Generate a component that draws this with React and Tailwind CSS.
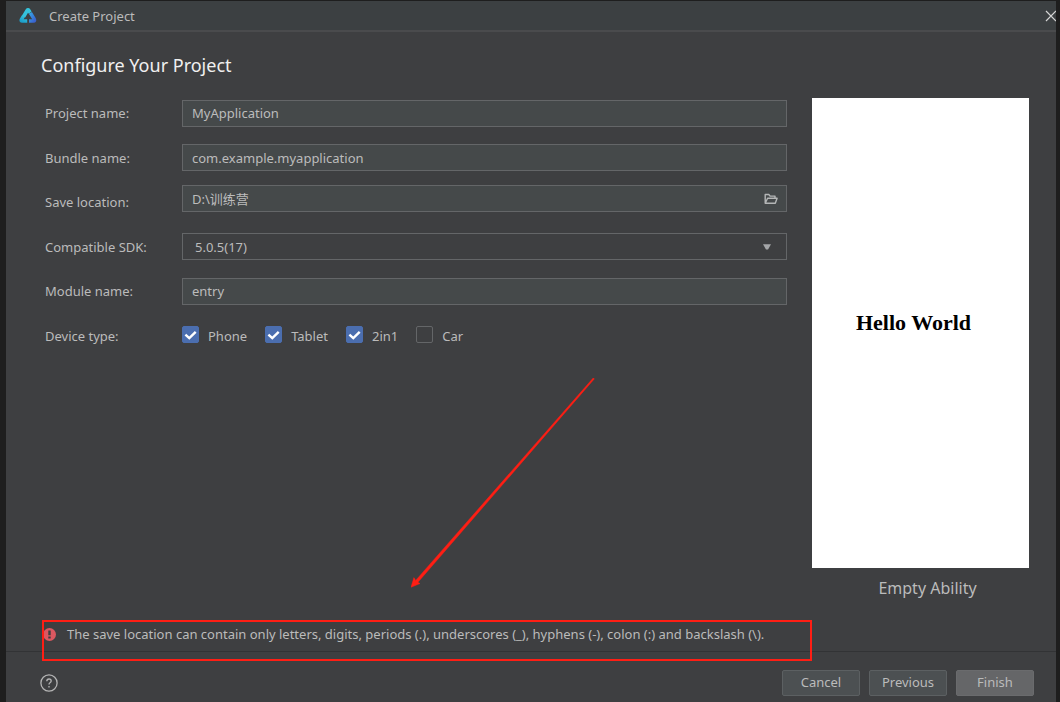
import { useState } from 'react'

const DEVICES = ['Phone', 'Tablet', '2in1', 'Car']

const FIELD =
  'block h-[27px] w-full rounded-none border border-[#646668] bg-[#45494a] px-[9px] text-[13px] text-[#bcbcbc] outline-none'

function Logo() {
  return (
    <svg viewBox="0 0 18 16" width="18" height="16" aria-hidden="true">
      <defs>
        <linearGradient id="logo-left" x1="0" y1="1" x2="0.7" y2="0">
          <stop offset="0" stopColor="#1c9fcb" />
          <stop offset="1" stopColor="#36c6dc" />
        </linearGradient>
        <linearGradient id="logo-right" x1="0" y1="0" x2="1" y2="1">
          <stop offset="0" stopColor="#35a9e6" />
          <stop offset="1" stopColor="#3a63d0" />
        </linearGradient>
      </defs>
      <path
        d="M8.2 13H3.4Q1.6 13 2.5 11.3L4.6 7.9"
        fill="none"
        stroke="url(#logo-left)"
        strokeWidth="3.6"
      />
      <path
        d="M3 7.4L6.6 1.4Q7.5 0 9 0Q10.5 0 11.4 1.4L12.6 3.4L9.8 5.8L9 4.8L6.2 9.4Z"
        fill="#35c3dc"
      />
      <path
        d="M11.4 4.8L15.2 11.2Q16.1 13 14.4 13H10"
        fill="none"
        stroke="url(#logo-right)"
        strokeWidth="3.6"
      />
    </svg>
  )
}

function Row({ label, htmlFor, children }) {
  return (
    <div className="flex items-center">
      <label htmlFor={htmlFor} className="w-[137px] shrink-0">
        {label}
      </label>
      <div className="relative flex-1">{children}</div>
    </div>
  )
}

function DeviceBox({ name, checked, onChange }) {
  return (
    <label className="flex items-center gap-[9px]">
      <span className="relative -mt-[3px] block size-[17px]">
        <input
          type="checkbox"
          checked={checked}
          onChange={onChange}
          className="block size-[17px] appearance-none rounded-[2px] border border-[#646668] checked:border-[#4b6eaf] checked:bg-[#4b6eaf]"
        />
        {checked && (
          <svg
            viewBox="0 0 17 17"
            className="pointer-events-none absolute inset-0 size-[17px] fill-none stroke-white"
            strokeWidth="2.4"
            aria-hidden="true"
          >
            <path d="M3.4 8.6l3.9 3.6 6.4-6.4" />
          </svg>
        )}
      </span>
      {name}
    </label>
  )
}

export default function App() {
  const [devices, setDevices] = useState(['Phone', 'Tablet', '2in1'])

  const toggle = (name) =>
    setDevices((list) =>
      list.includes(name) ? list.filter((d) => d !== name) : [...list, name],
    )

  return (
    <div className="min-h-screen bg-[#1e1e1e] pl-[6px] pr-1 pt-px font-['Noto_Sans','Noto_Sans_CJK_SC',sans-serif] text-[13px] leading-5 text-[#bbbbbb]">
      <div className="flex min-h-[calc(100vh-1px)] flex-col overflow-hidden bg-[#3e3f41]">
        <header className="flex h-[31px] items-center border-b-2 border-[#4a4b4d] bg-[#3c4042] pl-[13px]">
          <Logo />
          <h1 className="ml-3">Create Project</h1>
          <button type="button" aria-label="Close" className="-mr-px ml-auto">
            <svg viewBox="0 0 12 12" width="12" height="12" className="stroke-[#d6d6d6]">
              <path d="M1 1l10 10M11 1L1 11" strokeWidth="1.2" />
            </svg>
          </button>
        </header>

        <main className="relative flex flex-1 flex-col pl-[35px] pr-[27px] pt-5">
          <h2 className="text-[18px] leading-[26px] text-[#f0f0f0]">Configure Your Project</h2>

          <div className="flex gap-[25px]">
            <form className="mt-[13px] grid h-[267px] flex-1 grid-rows-6 pl-1">
              <Row label="Project name:" htmlFor="project">
                <input id="project" className={FIELD} defaultValue="MyApplication" />
              </Row>
              <Row label="Bundle name:" htmlFor="bundle">
                <input id="bundle" className={FIELD} defaultValue="com.example.myapplication" />
              </Row>
              <Row label="Save location:" htmlFor="location">
                <div className="relative mb-2">
                  <input id="location" className={FIELD} defaultValue="D:\训练营" />
                  <button
                    type="button"
                    aria-label="Browse"
                    className="absolute right-[9px] top-2"
                  >
                    <svg
                      viewBox="0 0 14 12"
                      width="14"
                      height="12"
                      className="fill-none stroke-[#b4b6b6]"
                      strokeWidth="1.4"
                      strokeLinejoin="round"
                    >
                      <path d="M1.2 10.2V1.5h3.6l1.3 1.6h4.9v2.1M1.2 10.2L3.6 5.2h9.5l-1.8 5z" />
                    </svg>
                  </button>
                </div>
              </Row>
              <Row label="Compatible SDK:" htmlFor="sdk">
                <select
                  id="sdk"
                  className="block h-[27px] w-full appearance-none border border-[#646668] bg-[#3e3f41] px-3 text-[13px] outline-none"
                >
                  <option>5.0.5(17)</option>
                </select>
                <svg
                  viewBox="0 0 8 6"
                  width="8"
                  height="6"
                  className="pointer-events-none absolute right-4 top-[11px] fill-[#a4a6a8]"
                  aria-hidden="true"
                >
                  <path d="M0 .2h8L5 5.4H3z" />
                </svg>
              </Row>
              <Row label="Module name:" htmlFor="module">
                <input id="module" className={FIELD} defaultValue="entry" />
              </Row>
              <fieldset className="flex items-center">
                <legend className="float-left w-[137px]">Device type:</legend>
                <div className="flex gap-[18px]">
                  {DEVICES.map((name) => (
                    <DeviceBox
                      key={name}
                      name={name}
                      checked={devices.includes(name)}
                      onChange={() => toggle(name)}
                    />
                  ))}
                </div>
              </fieldset>
            </form>

            <figure className="mt-5 w-[217px]">
              <div className="flex h-[470px] items-center justify-center bg-white pr-[14px] font-['Liberation_Serif',serif] text-[22px] font-bold text-black">
                <span className="-mt-5">Hello World</span>
              </div>
              <figcaption className="mt-[10px] pl-[14px] text-center text-[16px]">
                Empty Ability
              </figcaption>
            </figure>
          </div>

          <div role="alert" className="relative mb-[7px] mt-auto flex items-center gap-[11px] pl-[2px]">
            <svg viewBox="0 0 14 14" width="13" height="13" aria-hidden="true">
              <circle cx="7" cy="7" r="7" fill="#db5860" />
              <path d="M5.7 2.6h2.6v5.2H5.7zM5.7 9.2h2.6v2.2H5.7z" fill="#3e3f41" />
            </svg>
            The save location can contain only letters, digits, periods (.), underscores (_),
            hyphens (-), colon (:) and backslash (\).
            <span className="absolute -bottom-[17px] -top-1 left-px z-10 w-[770px] border-2 border-[#ff1e14]" />
          </div>

          {/* arrow pointing down at the error */}
          <svg
            viewBox="0 0 184 210"
            width="184"
            height="210"
            className="pointer-events-none absolute left-[405px] top-[346px]"
            aria-hidden="true"
          >
            <path
              d="M182.2 0L183.4 .8L6.9 204.3L9 205.6L0 209.2L2.9 199.6L4.7 202.4Z"
              className="fill-[#ff1e14] stroke-[#ff1e14]"
              strokeWidth=".5"
            />
          </svg>
        </main>

        <footer className="flex h-[51px] items-center border-t border-[#323335] pb-px pl-[34px] pr-[22px] pt-3">
          <button type="button" aria-label="Help">
            <svg
              viewBox="0 0 18 18"
              width="18"
              height="18"
              className="fill-none stroke-[#b4b4b4]"
              strokeWidth="1.3"
            >
              <circle cx="9" cy="9" r="8.1" />
              <path d="M6.8 7.3Q6.8 5 9 5T11.2 7.1Q11.2 8.1 10 8.8Q9 9.4 9 10.6M9 12v1.5" />
            </svg>
          </button>
          <div className="ml-auto flex gap-[9px] leading-none">
            <button
              type="button"
              className="h-[26px] w-[78px] rounded-[2px] border border-[#5c6062] bg-[#4c5052]"
            >
              Cancel
            </button>
            <button
              type="button"
              className="h-[26px] w-[78px] rounded-[2px] border border-[#5c6062] bg-[#4c5052]"
            >
              Previous
            </button>
            <button
              type="button"
              className="h-[26px] w-[78px] rounded-[2px] border border-[#6a6b6d] bg-[#656668]"
            >
              Finish
            </button>
          </div>
        </footer>
      </div>
    </div>
  )
}
